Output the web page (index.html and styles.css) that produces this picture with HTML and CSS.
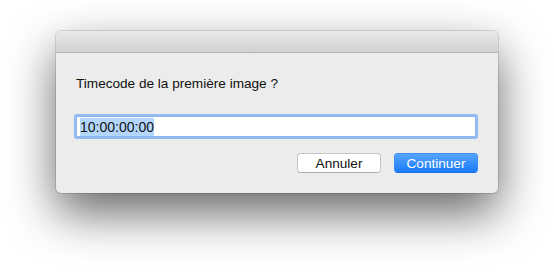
FILE: index.html
```html
<!DOCTYPE html>
<html lang="fr">

<head>
    <meta charset="UTF-8">
    <meta name="viewport" content="width=device-width, initial-scale=1.0">
    <title>Timecode</title>
    <link rel="stylesheet" href="styles.css">
</head>

<body>
    <div class="sheet">
        <div class="titlebar"></div>

        <div class="sheet-body">
            <p class="prompt">Timecode de la première image ?</p>

            <div class="field">
                <span class="selected">10:00:00:00</span>
            </div>

            <div class="actions">
                <button type="button" class="btn">Annuler</button>
                <button type="button" class="btn btn-default">Continuer</button>
            </div>
        </div>
    </div>
</body>

</html>
```

FILE: styles.css
```css
html,
body {
    min-height: 273px;
}

body {
    margin: 0;
    padding: 31px 0 0 56px;
    box-sizing: border-box;
    background-color: #fff;
    font-family: "Liberation Sans", Arial, sans-serif;
    color: #111;
}

.sheet {
    width: 442px;
    height: 162px;
    background-color: #ececec;
    border-radius: 5px;
    box-shadow: 0 0 0 1px rgba(0, 0, 0, 0.12), 0 20px 48px rgba(0, 0, 0, 0.6);
    overflow: hidden;
}

.titlebar {
    height: 21px;
    background: linear-gradient(#e9e9e9, #d2d2d2);
    border-bottom: 1px solid #b4b4b4;
}

.sheet-body {
    padding: 22px 22px 0 20px;
}

.prompt {
    margin: 0;
    font-size: 13.6px;
    line-height: 17px;
}

/* text field with focus ring */
.field {
    margin-top: 24px;
    height: 21px;
    padding: 0 3px;
    background-color: #fff;
    border: 1px solid #8fb7ec;
    box-shadow: 0 0 0 2px #93bdf2;
    border-radius: 1px;
    font-size: 14px;
    line-height: 21px;
    box-sizing: border-box;
}

.selected {
    background-color: #b3d6fd;
    padding: 1px 0;
}

.actions {
    display: flex;
    justify-content: flex-end;
    gap: 13px;
    margin: 16px -2px 0 0;
}

.btn {
    width: 84px;
    height: 20px;
    padding: 0;
    font-family: inherit;
    font-size: 13.6px;
    color: #111;
    background-color: #fff;
    border: 1px solid #c5c5c5;
    border-bottom-color: #adadad;
    border-radius: 4px;
}

.btn-default {
    color: #fff;
    background: linear-gradient(#55a4fc, #1a7cf9);
    border-color: #3c8ffa;
    border-bottom-color: #1d6fe8;
}
```
